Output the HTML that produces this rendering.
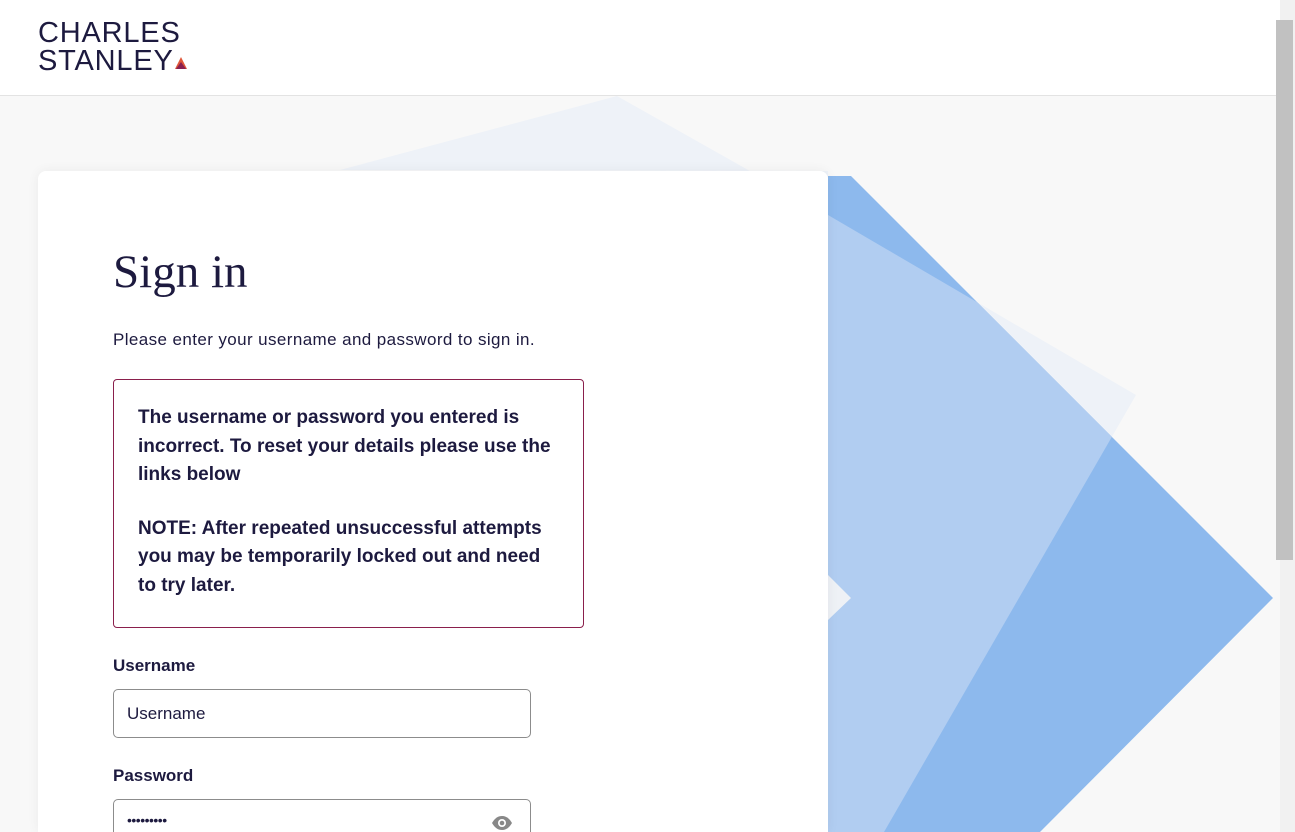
<!DOCTYPE html>
<html><head><style>
html,body{margin:0;padding:0;width:1295px;height:832px;overflow:hidden;background:#f8f8f8;font-family:"Liberation Sans",sans-serif;color:#1d1a3f}
.wrap{position:relative;width:1295px;height:832px;overflow:hidden}
.hdr{position:absolute;left:0;top:0;width:1280px;height:95px;background:#fff;border-bottom:1px solid #e3e3e3}
.logo{position:absolute;left:38px;top:19px;font-size:29px;line-height:28px;letter-spacing:0.8px;color:#1d1a3f}
svg.bg{position:absolute;left:0;top:0}
.card{position:absolute;left:38px;top:171px;width:790px;height:661px;background:#fff;border-radius:8px 8px 0 0;box-shadow:0 0 12px rgba(0,0,0,0.06)}
h1{position:absolute;left:113px;top:245px;margin:0;font-family:"Liberation Serif",serif;font-weight:normal;font-size:47px;color:#1d1a3f}
.sub{position:absolute;left:113px;top:330px;font-size:17px;letter-spacing:0.4px}
.err{position:absolute;left:113px;top:379px;width:421px;height:199px;border:1px solid #8a1f4c;border-radius:4px;padding:24px;font-weight:bold;font-size:19px;line-height:28.5px}
.err p{margin:0 0 25px}
.lbl{position:absolute;left:113px;font-weight:bold;font-size:17px}
.inp{position:absolute;left:113px;width:416px;height:47px;border:1px solid #8c8c8c;border-radius:5px;background:#fff}
.inp span{position:absolute;left:13px;top:14px;font-size:17px}
.sb{position:absolute;left:1280px;top:0;width:15px;height:832px;background:#f1f1f1}
.th{position:absolute;left:1276px;top:20px;width:17px;height:540px;background:#c1c1c1}
</style></head><body><div class="wrap">
<svg class="bg" width="1280" height="832">
<defs><clipPath id="c"><polygon points="828,176 851,176 1273,598 1040,832 828,832"/></clipPath></defs>
<polygon points="340,170 617,96 828,215 1136,395 884,832 828,832 828,171" fill="#eef2f8"/>
<polygon points="828,176 851,176 1273,598 1040,832 828,832" fill="#8db9ed"/>
<polygon points="828,215 1136,395 884,832 828,832" fill="#b1cdf1" clip-path="url(#c)"/>
<polygon points="828,575 851,598 828,620" fill="#eef1f6"/>
</svg>
<div class="hdr"><div class="logo">CHARLES<br>STANLEY<svg width="12" height="12" style="margin-left:1px;vertical-align:1px" viewBox="0 0 12 12"><polygon points="6,0 12,12 0,12" fill="#e0573a"/><polygon points="6,5 11,12 1,12" fill="#8a2050"/></svg></div></div>
<div class="card"></div>
<h1>Sign in</h1>
<div class="sub">Please enter your username and password to sign in.</div>
<div class="err"><p>The username or password you entered is incorrect. To reset your details please use the links below</p><p>NOTE: After repeated unsuccessful attempts you may be temporarily locked out and need to try later.</p></div>
<div class="lbl" style="top:656px">Username</div>
<div class="inp" style="top:689px"><span>Username</span></div>
<div class="lbl" style="top:766px">Password</div>
<div class="inp" style="top:799px"><span style="top:12px;font-size:14px;letter-spacing:-0.5px">•••••••••</span>
<svg style="position:absolute;left:377px;top:15px" width="22" height="16" viewBox="0 0 22 16"><path d="M1 8C4 3 7 1 11 1s7 2 10 7c-3 5-6 7-10 7S4 13 1 8z" fill="#888"/><circle cx="11" cy="8" r="4" fill="#fff"/><circle cx="11" cy="8" r="2.3" fill="#888"/></svg></div>
<div class="sb"></div><div class="th"></div>
</div></body></html>
